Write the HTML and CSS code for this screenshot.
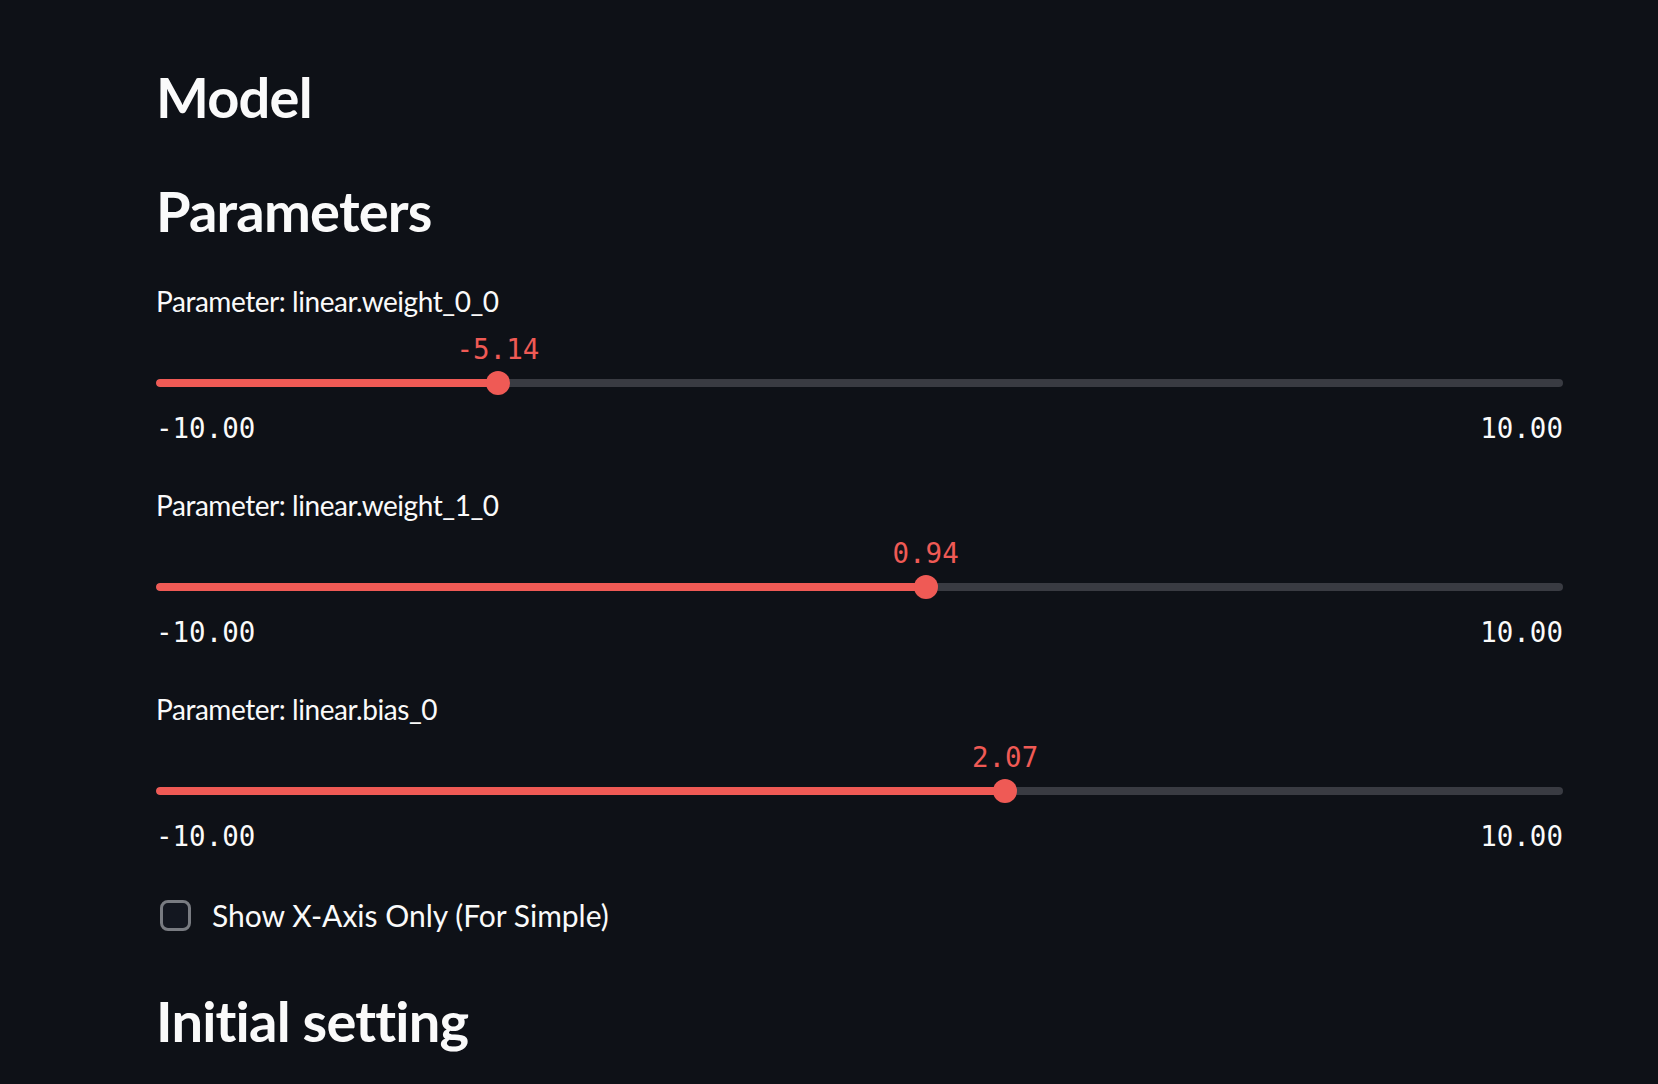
FILE: index.html
```html
<!DOCTYPE html>
<html lang="en">
<head>
<meta charset="utf-8">
<title>Model</title>
<link rel="stylesheet" href="styles.css">
</head>
<body>
<main class="main">
  <h3 class="heading heading-model">Model</h3>
  <h3 class="heading heading-params">Parameters</h3>

  <div class="slider">
    <div class="slider-label">Parameter: linear.weight_0_0</div>
    <div class="slider-body">
      <div class="track">
        <div class="fill" style="width: 24.3%"></div>
      </div>
      <div class="thumb" style="left: 24.3%"></div>
      <div class="value" style="left: 24.3%">-5.14</div>
    </div>
    <div class="minmax"><span>-10.00</span><span>10.00</span></div>
  </div>

  <div class="slider">
    <div class="slider-label">Parameter: linear.weight_1_0</div>
    <div class="slider-body">
      <div class="track">
        <div class="fill" style="width: 54.7%"></div>
      </div>
      <div class="thumb" style="left: 54.7%"></div>
      <div class="value" style="left: 54.7%">0.94</div>
    </div>
    <div class="minmax"><span>-10.00</span><span>10.00</span></div>
  </div>

  <div class="slider">
    <div class="slider-label">Parameter: linear.bias_0</div>
    <div class="slider-body">
      <div class="track">
        <div class="fill" style="width: 60.35%"></div>
      </div>
      <div class="thumb" style="left: 60.35%"></div>
      <div class="value" style="left: 60.35%">2.07</div>
    </div>
    <div class="minmax"><span>-10.00</span><span>10.00</span></div>
  </div>

  <label class="checkbox">
    <span class="box"></span>
    <span class="checkbox-text">Show X-Axis Only (For Simple)</span>
  </label>

  <h3 class="heading heading-initial">Initial setting</h3>
</main>
</body>
</html>
```

FILE: styles.css
```css
html, body {
  margin: 0;
  padding: 0;
  background: #0e1117;
  height: 100%;
  overflow: hidden;
}

body {
  color: #fafafa;
  font-family: Lato, "Noto Sans", sans-serif;
}

.main {
  padding: 63px 95px 0 156px;
  display: flex;
  flex-direction: column;
}

.heading {
  margin: 0;
  font-size: 56px;
  line-height: 67px;
  height: 67px;
  font-weight: 700;
  letter-spacing: -0.8px;
}

.heading-params {
  margin-top: 47px;
}

.heading-initial {
  margin-top: 52px;
}

.slider {
  display: flex;
  flex-direction: column;
  margin-top: 37px;
}

.slider + .slider {
  margin-top: 37px;
}

.slider-label {
  font-size: 28px;
  line-height: 40px;
  height: 40px;
  letter-spacing: -0.45px;
  white-space: nowrap;
}

.slider-body {
  position: relative;
  height: 86px;
}

.track {
  position: absolute;
  left: 0;
  right: 0;
  top: 58px;
  height: 8px;
  border-radius: 4px;
  background: #393b42;
  overflow: hidden;
}

.fill {
  height: 100%;
  background: #ef5a55;
  border-radius: 4px 0 0 4px;
}

.thumb {
  position: absolute;
  top: 50px;
  width: 24px;
  height: 24px;
  margin-left: -12px;
  border-radius: 50%;
  background: #ef5a55;
}

.value {
  position: absolute;
  top: 10px;
  transform: translateX(-50%);
  font-family: "DejaVu Sans Mono", "Liberation Mono", monospace;
  font-size: 27.5px;
  line-height: 36px;
  color: #ef5a55;
  white-space: nowrap;
}

.minmax {
  display: flex;
  justify-content: space-between;
  font-family: "DejaVu Sans Mono", "Liberation Mono", monospace;
  font-size: 27.5px;
  line-height: 40px;
  height: 40px;
  padding-top: 1px;
}

.checkbox {
  margin-top: 39px;
  display: flex;
  align-items: center;
  height: 40px;
  gap: 21px;
  padding-left: 4px;
}

.box {
  box-sizing: border-box;
  width: 31px;
  height: 31px;
  border: 3.5px solid #787b81;
  border-radius: 8px;
  background: #131720;
  flex: none;
}

.checkbox-text {
  font-size: 30px;
  line-height: 40px;
  white-space: nowrap;
}
```
